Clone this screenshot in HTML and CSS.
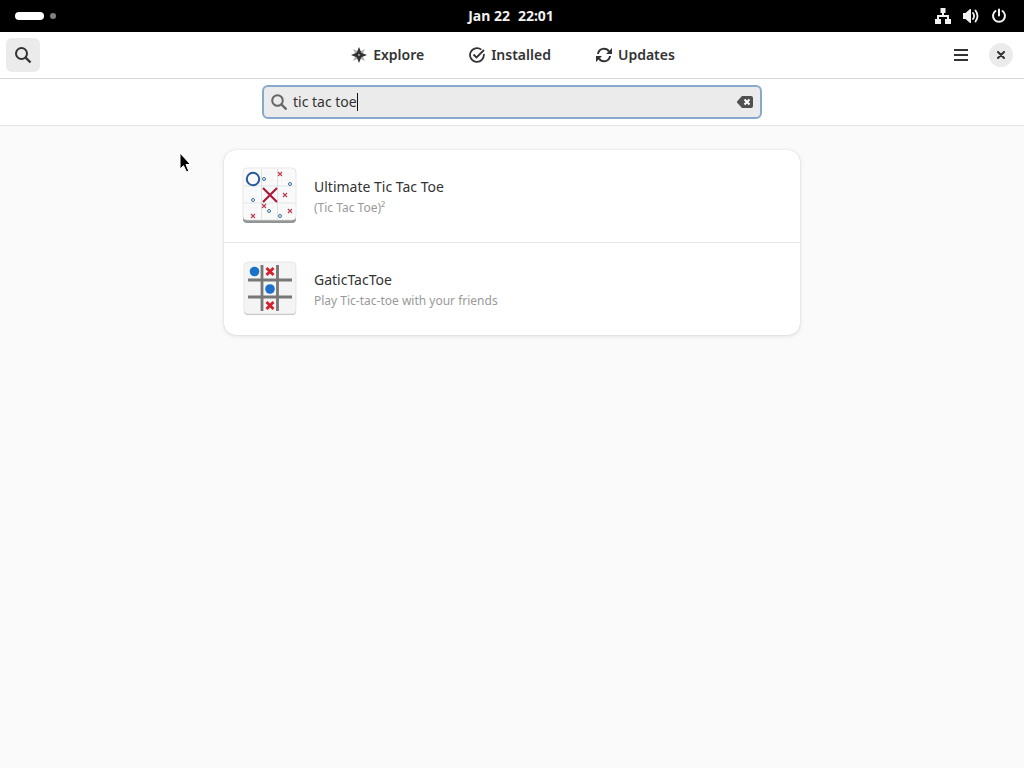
FILE: index.html
```
<!DOCTYPE html>
<html lang="en">
<head>
    <meta charset="UTF-8">
    <title>Software</title>
    <meta name="viewport" content="width=device-width, initial-scale=1">
    <link rel="stylesheet" href="styles.css">
</head>
<body>
    <div class="topbar">
        <div class="workspaces">
            <span class="pill"></span>
            <span class="dot"></span>
        </div>
        <div class="clock"><span>Jan 22</span><span>22:01</span></div>
        <div class="status">
            <svg width="16" height="16" viewBox="0 0 16 16" fill="currentColor">
                <path d="M5.500 0h5v5H9v2h5v4h2v5h-6v-5h2V9H4v2h2v5H0v-5h2V7h5V5H5.500z"/>
            </svg>
            <svg width="16" height="16" viewBox="0 0 16 16">
                <path d="M0 5h2.500L7 1h1v14H7l-4.500-4H0z" fill="currentColor"/>
                <path d="M10 5q2.200 3 0 6M12.500 2.500q4 5.500 0 11" fill="none" stroke="currentColor" stroke-width="1.800" stroke-linecap="round"/>
            </svg>
            <svg width="16" height="16" viewBox="0 0 16 16" fill="none" stroke="currentColor" stroke-width="2" stroke-linecap="round">
                <path d="M8 1.500v6M4.500 3a6 6 0 1 0 7 0"/>
            </svg>
        </div>
    </div>

    <header class="header">
        <button type="button" class="search-toggle" aria-label="Search">
            <svg width="18" height="18" viewBox="0 0 18 18" fill="none" stroke="currentColor" stroke-width="2">
                <circle cx="7.500" cy="7.500" r="5.500"/>
                <path d="M11.500 11.500l5 5" stroke-width="2.400"/>
            </svg>
        </button>
        <nav class="tabs">
            <button type="button">
                <svg width="16" height="16" viewBox="0 0 16 16" fill="currentColor">
                    <path d="M2 2l4 2h4l4-2-2 4v4l2 4-4-2H6l-4 2 2-4V6z" opacity="0.4"/>
                    <path fill-rule="evenodd" d="M8 0l2.300 5.700L16 8l-5.700 2.300L8 16l-2.300-5.700L0 8l5.700-2.300zM8 7a1 1 0 1 0 0 2a1 1 0 0 0 0-2z"/>
                </svg>
                Explore
            </button>
            <button type="button">
                <svg width="16" height="16" viewBox="0 0 16 16" fill="none" stroke="currentColor" stroke-width="1.800">
                    <path d="M12.300 2.600A6.900 6.900 0 1 0 14.800 7M4.500 7.500l3 3L15 3"/>
                </svg>
                Installed
            </button>
            <button type="button">
                <svg width="16" height="16" viewBox="0 0 16 16">
                    <path d="M2 7a6 6 0 0 1 11-2.500M14 9a6 6 0 0 1-11 2.500" fill="none" stroke="currentColor" stroke-width="2"/>
                    <path d="M16 1v6h-6zM0 15V9h6z" fill="currentColor"/>
                </svg>
                Updates
            </button>
        </nav>
        <div class="window-buttons">
            <button type="button" class="menu" aria-label="Menu">
                <svg width="14" height="12" viewBox="0 0 14 12" fill="currentColor">
                    <path d="M0 0h14v2H0zM0 5h14v2H0zM0 10h14v2H0z"/>
                </svg>
            </button>
            <button type="button" class="close" aria-label="Close">
                <svg width="8" height="8" viewBox="0 0 8 8" stroke="currentColor" stroke-width="2" stroke-linecap="round">
                    <path d="M1 1l6 6M7 1l-6 6"/>
                </svg>
            </button>
        </div>
    </header>

    <form class="searchbar">
        <div class="entry">
            <svg class="entry-icon" width="16" height="16" viewBox="0 0 16 16" fill="none" stroke="currentColor" stroke-width="2">
                <circle cx="6.500" cy="6.500" r="5.300"/>
                <path d="M10.500 10.500l5 5" stroke-width="2.400"/>
            </svg>
            <input type="text" value="tic tac toe" aria-label="Search apps">
            <span class="caret"></span>
            <button type="button" class="clear" aria-label="Clear">
                <svg width="16" height="12" viewBox="0 0 16 12">
                    <path d="M5 0h9q2 0 2 2v8q0 2-2 2H5L0 6.500v-1z" fill="currentColor"/>
                    <path d="M7.500 3.500l5 5M12.500 3.500l-5 5" stroke="#fff" stroke-width="2"/>
                </svg>
            </button>
        </div>
    </form>

    <main>
        <ul class="results">
            <li>
                <svg class="app-icon" width="56" height="58" viewBox="0 0 56 58" fill="none">
                    <rect x="2" y="3" width="53" height="53" rx="4" fill="#929595"/>
                    <rect x="2" y="1" width="53" height="52" rx="4" fill="#fafafa" stroke="#dedede" stroke-width="0.700"/>
                    <path d="M20.500 2v50M36.500 2v50M3 19h51M3 36h51" stroke="#dce5e5"/>
                    <path d="M25 4v12M31 4v12M22 7h12M22 13h12M41 4v12M47 4v12M38 7h12M38 13h12M9 21v12M15 21v12M6 24h12M6 30h12M41 21v12M47 21v12M38 24h12M38 30h12M9 38v12M15 38v12M6 41h12M6 47h12M25 38v12M31 38v12M22 41h12M22 47h12M41 38v12M47 38v12M38 41h12M38 47h12" stroke="#f0f2f2" stroke-width="0.700"/>
                    <circle cx="12" cy="12" r="6.200" stroke="#28589b" stroke-width="2"/>
                    <path d="M22 21l14 14M36 21L22 35" stroke="#ad1939" stroke-width="2.200"/>
                    <g stroke="#367092">
                        <circle cx="23" cy="12" r="1.500"/>
                        <circle cx="49" cy="17" r="1.500"/>
                        <circle cx="12" cy="33" r="1.500"/>
                        <circle cx="28" cy="44" r="1.500"/>
                        <circle cx="39" cy="49" r="1.500"/>
                    </g>
                    <path d="M37 5l4 4m0-4l-4 4M42 26l4 4m0-4l-4 4M21 37l4 4m0-4l-4 4M47 42l4 4m0-4l-4 4M10 47l4 4m0-4l-4 4" stroke="#bc3851" stroke-width="1.100"/>
                </svg>
                <div class="app-text">
                    <h2>Ultimate Tic Tac Toe</h2>
                    <p>(Tic Tac Toe)²</p>
                </div>
            </li>
            <li>
                <svg class="app-icon" width="56" height="58" viewBox="0 0 56 58">
                    <rect x="3" y="3" width="52" height="52" rx="4" fill="#bcbcbc"/>
                    <rect x="3" y="2" width="52" height="52" rx="4" fill="#f4f4f4" stroke="#dedede" stroke-width="0.700"/>
                    <path d="M21 5v46M36.500 5v46M7 20h44M7 37h44" stroke="#777" stroke-width="2.800"/>
                    <circle cx="13.500" cy="11.500" r="4.800" fill="#1b70c9"/>
                    <circle cx="29" cy="29" r="4.800" fill="#1b70c9"/>
                    <path d="M25.500 8l7 7m0-7l-7 7M25.500 42l7 7m0-7l-7 7" stroke="#d3202a" stroke-width="2.800"/>
                </svg>
                <div class="app-text">
                    <h2>GaticTacToe</h2>
                    <p>Play Tic-tac-toe with your friends</p>
                </div>
            </li>
        </ul>
    </main>

    <svg class="pointer" width="12" height="21" viewBox="0 0 12 21">
        <path d="M1 1v16l3.500-3.300L7.500 20l2.300-1L7 12.500h4.500z" fill="#000" stroke="#fff"/>
    </svg>
</body>
</html>
```
FILE: styles.css
```
* { box-sizing: border-box; }
body {
    margin: 0; min-height: 100vh; background: #fafafa; color: #333;
    font-family: "Noto Sans", "Open Sans", sans-serif; font-size: 14px; line-height: 20px;
}
svg { display: block; flex: none; }
button { display: flex; align-items: center; justify-content: center; padding: 0; border: none; background: none; color: inherit; font: inherit; cursor: pointer; }

.topbar { display: grid; grid-template-columns: 1fr auto 1fr; align-items: center; height: 32px; padding: 0 17px 0 15px; background: #000; color: #f2f2f2; }
.workspaces { display: flex; align-items: center; gap: 6px; }
.pill { width: 29px; height: 8px; border-radius: 4px; background: #fff; }
.dot { width: 6px; height: 6px; border-radius: 50%; background: #808080; }
.clock { display: flex; gap: 8px; font-weight: 700; }
.status { display: flex; justify-content: flex-end; gap: 12px; }

.header { display: grid; grid-template-columns: 1fr auto 1fr; align-items: center; height: 47px; padding: 0 11px 0 6px; background: #fff; border-bottom: 1px solid #d8d8d8; }
.search-toggle { width: 34px; height: 34px; border-radius: 6px; background: #ebebeb; }
.tabs { display: flex; gap: 45px; padding-left: 7px; font-weight: 600; }
.tabs button { gap: 6px; }
.window-buttons { display: flex; align-items: center; justify-content: flex-end; gap: 14px; }
.menu { width: 28px; height: 34px; }
.close { width: 24px; height: 24px; border-radius: 50%; background: #ebebeb; }

.searchbar { display: flex; justify-content: center; padding: 6px; background: #fff; border-bottom: 1px solid #e4e4e4; }
.entry { position: relative; display: flex; align-items: center; gap: 6px; width: 100%; max-width: 500px; height: 34px; padding: 0 7px; border: 2px solid #87a9cf; border-radius: 6px; background: #ebebeb; }
.entry-icon { color: #666; }
.entry input { flex: 1; min-width: 0; padding: 0; border: none; outline: none; background: none; color: inherit; font: inherit; caret-color: transparent; }
.caret { position: absolute; left: 93px; top: 6px; width: 1px; height: 18px; background: #111; }
.clear { color: #505050; }

main { padding: 24px 18px; }
.results { max-width: 576px; margin: 0 auto; padding: 0; list-style: none; background: #fff; border-radius: 12px; box-shadow: 0 0 1px rgba(0, 0, 0, 0.2), 0 1px 4px rgba(0, 0, 0, 0.12); }
.results li { display: flex; align-items: center; gap: 17px; padding: 17px; }
.results li + li { border-top: 1px solid #e6e6e6; }
.app-text { padding-top: 2px; }
.app-text h2 { margin: 0; font-size: 14px; font-weight: 400; line-height: 22px; }
.app-text p { margin: 0; color: #999; font-size: 12px; line-height: 20px; }

.pointer { position: absolute; left: 179px; top: 152px; }
```
